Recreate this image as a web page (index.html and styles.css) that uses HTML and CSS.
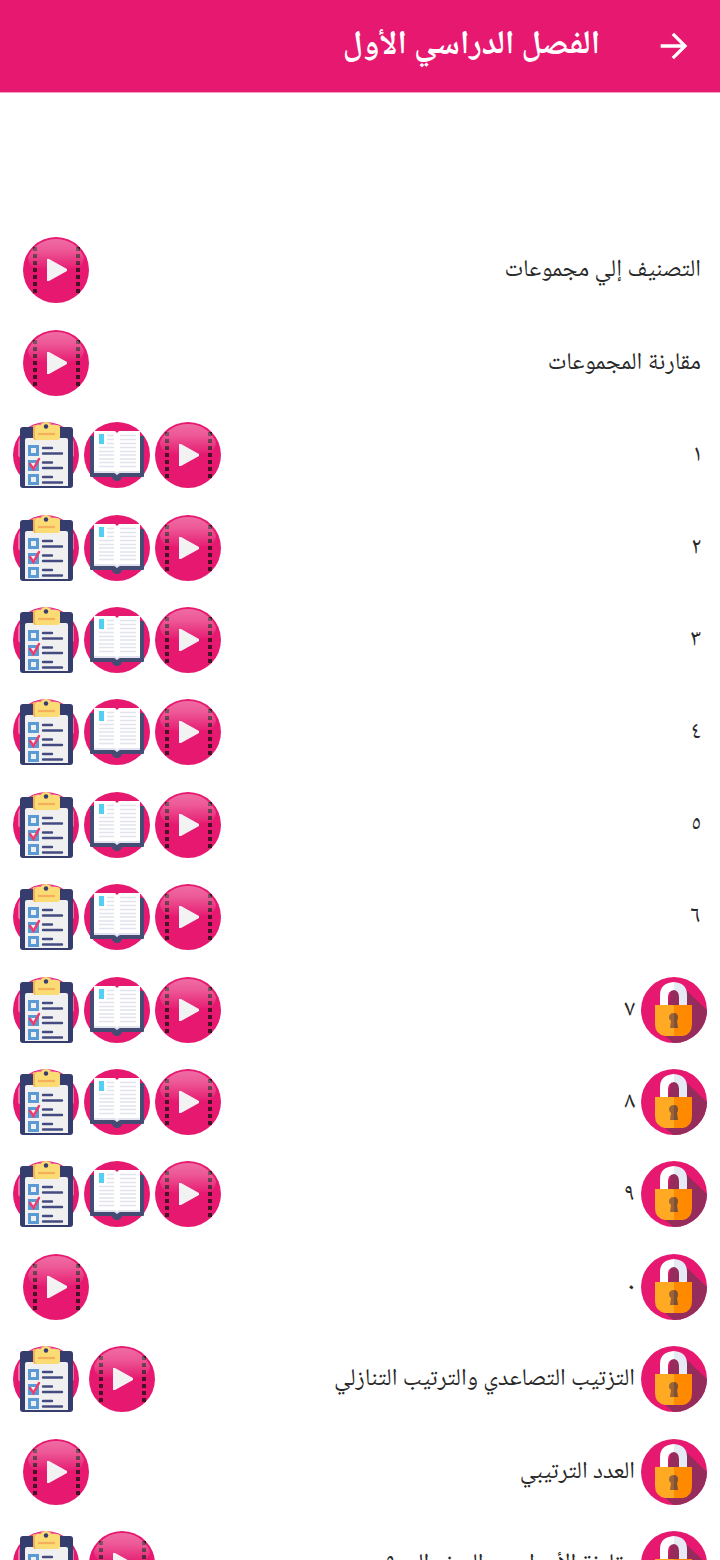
FILE: index.html
```
<!DOCTYPE html>
<html lang="ar" dir="rtl">
<head>
<meta charset="utf-8">
<meta name="viewport" content="width=device-width, initial-scale=1">
<title>الفصل الدراسي الأول</title>
<link rel="stylesheet" href="styles.css">
</head>
<body>
<svg class="sprite" aria-hidden="true">
  <defs>
    <linearGradient id="gloss" x1="0" y1="0" x2="0" y2="1">
      <stop offset="0" stop-color="#fff" stop-opacity=".36"/>
      <stop offset=".35" stop-color="#fff" stop-opacity=".28"/>
      <stop offset="1" stop-color="#fff" stop-opacity="0"/>
    </linearGradient>
    <clipPath id="disc"><circle cx="33" cy="33" r="33"/></clipPath>
  </defs>
  <symbol id="play" viewBox="0 0 66 66">
    <circle cx="33" cy="33" r="33" fill="#e6186f"/>
    <path d="M12 10v46M55 10v46" stroke="#471126" stroke-width="4" stroke-dasharray="4 3"/>
    <path d="M24 22h2L44 32v2L26 44h-2z" fill="#f2f2f2"/>
    <path d="M5 20C10 9 20 2 33 2s23 7 28 18c0 6-4 10-9 11q-19 5-38 0C9 30 5 26 5 20z" fill="url(#gloss)"/>
  </symbol>
  <symbol id="book" viewBox="0 0 66 66">
    <circle cx="33" cy="33" r="33" fill="#e6186f"/>
    <path d="M6 15q0-1 1-1h52q1 0 1 1v39q0 1-1 1H38q-1 4-5 4t-5-4H7q-1 0-1-1z" fill="#454c73"/>
    <path d="M10 9h21l2 2 2-2h21v42H36q-2 0-3 2-1-2-3-2H10z" fill="#fff"/>
    <path d="M10 49h20q2 0 3 2 1-2 3-2h20v2H36q-2 0-3 2-1-2-3-2H10z" fill="#e1e4ee"/>
    <path d="M15 12h5v10h-5z" fill="#52cff5"/>
    <path d="M23 13.500h7M23 17.500h7M23 21.500h7M15 25.500h15M15 29.500h15M15 33h15M15 37h15M15 40.500h15M15 44.500h15M36 13.500h16M36 17.500h16M36 21.500h16M36 25.500h16M36 29.500h16M36 33h16M36 37h16M36 40.500h16M36 44.500h16" stroke="#e1e4ee" stroke-width="1.300"/>
  </symbol>
  <symbol id="quiz" viewBox="0 0 66 66">
    <circle cx="33" cy="33" r="33" fill="#e6186f"/>
    <path d="M5 20C10 8 20 1 33 1s23 7 28 19v14l-5 4H10l-5-4z" fill="#fff" opacity=".38"/>
    <rect x="7" y="5" width="53" height="61" rx="3" fill="#353c6e"/>
    <path d="M14 16h39q2 0 2 2v46H12V18q0-2 2-2z" fill="#f0f0f1"/>
    <path d="M22 3h6q1-3 5-3t5 3h6q3 0 3 3v9q0 3-3 3H23q-3 0-3-3V5q0-2 2-2z" fill="#fbdc74"/>
    <path d="M22 3h2q-2 1-2 3v9q0 3 2 3h-1q-3 0-3-3V5q0-2 2-2z" fill="#f5ae5b"/>
    <path d="M25 12h17" stroke="#f5ae5b" stroke-width="2.200"/>
    <circle cx="33" cy="4.500" r="2.200" fill="#353c6e"/>
    <g fill="#f0f0f1" stroke="#5a9bd5" stroke-width="3">
      <path d="M16.500 24.500h8v8h-8zM16.500 39.500h8v8h-8zM16.500 53.500h8v8h-8z"/>
    </g>
    <path d="M17 42l3.500 5L26 37" fill="none" stroke="#ee3b6e" stroke-width="2.500" stroke-linecap="round"/>
    <path d="M30 26h9M30 31.500h19M30 40.500h9M30 46h19M30 55h9M30 60.500h19" stroke="#444b80" stroke-width="2.400" stroke-linecap="round"/>
  </symbol>
  <symbol id="lock" viewBox="0 0 66 66">
    <circle cx="33" cy="33" r="33" fill="#e6186f"/>
    <path d="M44 12l26 25v33H37L22 57l8-44z" fill="#952c5b" clip-path="url(#disc)"/>
    <path d="M19 29V18q0-12 14-13v8q-6 1-6 7v9z" fill="#fff"/>
    <path d="M46 29V18q0-12-13-13v8q5 1 5 7v9z" fill="#e6eaf5"/>
    <path d="M14 28h19v31h-9q-10-2-10-12z" fill="#ffaa22"/>
    <path d="M51 28H33v31h9q9-2 9-12z" fill="#ff8a00"/>
    <path d="M33 36q-5 0-5 4.500 0 2 2 3.500l-1 7h4z" fill="#9a6437"/>
    <path d="M33 36q4 0 4 4.500 0 2-1 3.500l1 7h-4z" fill="#7d5038"/>
  </symbol>
</svg>

<header class="bar">
  <button class="back" type="button" aria-label="رجوع">
    <svg viewBox="0 0 24 24"><path d="M12 4l-1.410 1.410L16.170 11H4v2h12.170l-5.580 5.590L12 20l8-8z"/></svg>
  </button>
  <h1 class="title">الفصل الدراسي الأول</h1>
</header>

<main>
<ul class="lessons">
  <li class="lesson"><span class="name">التصنيف إلي مجموعات</span><div class="actions solo"><button class="action" type="button" aria-label="فيديو"><svg><use href="#play"/></svg></button></div></li>
  <li class="lesson"><span class="name">مقارنة المجموعات</span><div class="actions solo"><button class="action" type="button" aria-label="فيديو"><svg><use href="#play"/></svg></button></div></li>
  <li class="lesson"><span class="name">١</span><div class="actions"><button class="action" type="button" aria-label="فيديو"><svg><use href="#play"/></svg></button><button class="action" type="button" aria-label="كتاب"><svg><use href="#book"/></svg></button><button class="action" type="button" aria-label="اختبار"><svg><use href="#quiz"/></svg></button></div></li>
  <li class="lesson"><span class="name">٢</span><div class="actions"><button class="action" type="button" aria-label="فيديو"><svg><use href="#play"/></svg></button><button class="action" type="button" aria-label="كتاب"><svg><use href="#book"/></svg></button><button class="action" type="button" aria-label="اختبار"><svg><use href="#quiz"/></svg></button></div></li>
  <li class="lesson"><span class="name">٣</span><div class="actions"><button class="action" type="button" aria-label="فيديو"><svg><use href="#play"/></svg></button><button class="action" type="button" aria-label="كتاب"><svg><use href="#book"/></svg></button><button class="action" type="button" aria-label="اختبار"><svg><use href="#quiz"/></svg></button></div></li>
  <li class="lesson"><span class="name">٤</span><div class="actions"><button class="action" type="button" aria-label="فيديو"><svg><use href="#play"/></svg></button><button class="action" type="button" aria-label="كتاب"><svg><use href="#book"/></svg></button><button class="action" type="button" aria-label="اختبار"><svg><use href="#quiz"/></svg></button></div></li>
  <li class="lesson"><span class="name">٥</span><div class="actions"><button class="action" type="button" aria-label="فيديو"><svg><use href="#play"/></svg></button><button class="action" type="button" aria-label="كتاب"><svg><use href="#book"/></svg></button><button class="action" type="button" aria-label="اختبار"><svg><use href="#quiz"/></svg></button></div></li>
  <li class="lesson"><span class="name">٦</span><div class="actions"><button class="action" type="button" aria-label="فيديو"><svg><use href="#play"/></svg></button><button class="action" type="button" aria-label="كتاب"><svg><use href="#book"/></svg></button><button class="action" type="button" aria-label="اختبار"><svg><use href="#quiz"/></svg></button></div></li>
  <li class="lesson"><svg class="lock"><use href="#lock"/></svg><span class="name">٧</span><div class="actions"><button class="action" type="button" aria-label="فيديو"><svg><use href="#play"/></svg></button><button class="action" type="button" aria-label="كتاب"><svg><use href="#book"/></svg></button><button class="action" type="button" aria-label="اختبار"><svg><use href="#quiz"/></svg></button></div></li>
  <li class="lesson"><svg class="lock"><use href="#lock"/></svg><span class="name">٨</span><div class="actions"><button class="action" type="button" aria-label="فيديو"><svg><use href="#play"/></svg></button><button class="action" type="button" aria-label="كتاب"><svg><use href="#book"/></svg></button><button class="action" type="button" aria-label="اختبار"><svg><use href="#quiz"/></svg></button></div></li>
  <li class="lesson"><svg class="lock"><use href="#lock"/></svg><span class="name">٩</span><div class="actions"><button class="action" type="button" aria-label="فيديو"><svg><use href="#play"/></svg></button><button class="action" type="button" aria-label="كتاب"><svg><use href="#book"/></svg></button><button class="action" type="button" aria-label="اختبار"><svg><use href="#quiz"/></svg></button></div></li>
  <li class="lesson"><svg class="lock"><use href="#lock"/></svg><span class="name">٠</span><div class="actions solo"><button class="action" type="button" aria-label="فيديو"><svg><use href="#play"/></svg></button></div></li>
  <li class="lesson"><svg class="lock"><use href="#lock"/></svg><span class="name">التزتيب التصاعدي والترتيب التنازلي</span><div class="actions pair"><button class="action" type="button" aria-label="فيديو"><svg><use href="#play"/></svg></button><button class="action" type="button" aria-label="اختبار"><svg><use href="#quiz"/></svg></button></div></li>
  <li class="lesson"><svg class="lock"><use href="#lock"/></svg><span class="name">العدد الترتيبي</span><div class="actions solo"><button class="action" type="button" aria-label="فيديو"><svg><use href="#play"/></svg></button></div></li>
  <li class="lesson"><svg class="lock"><use href="#lock"/></svg><span class="name">مقارنة الأعداد من الصفر إلى ٩</span><div class="actions pair"><button class="action" type="button" aria-label="فيديو"><svg><use href="#play"/></svg></button><button class="action" type="button" aria-label="اختبار"><svg><use href="#quiz"/></svg></button></div></li>
</ul>
</main>
</body>
</html>
```
FILE: styles.css
```
* {
  box-sizing: border-box;
}

body {
  margin: 0;
  height: 100vh;
  display: flex;
  flex-direction: column;
  background: #fff;
  color: #282828;
  font-family: "Noto Naskh Arabic UI", "Noto Naskh Arabic", "Noto Sans", sans-serif;
  font-size: 24px;
}

.sprite {
  position: absolute;
  width: 0;
  height: 0;
}

.bar {
  flex: none;
  display: flex;
  align-items: center;
  gap: 54px;
  padding: 26px;
  border-bottom: 1px solid #f5a3c5;
  background: #e6186f;
}

.back {
  display: block;
  width: 40px;
  height: 40px;
  padding: 0;
  border: 0;
  background: none;
}

.back svg {
  display: block;
  width: 100%;
  height: 100%;
  fill: #fff;
}

.title {
  margin: 0;
  color: #fff;
  font-size: 33px;
  font-weight: 700;
  line-height: 40px;
}

main {
  flex: 1;
  min-height: 0;
  overflow-y: auto;
  scrollbar-width: none;
}

.lessons {
  margin: 0;
  padding: 131px 0 0;
  list-style: none;
}

.lesson {
  display: flex;
  align-items: center;
  min-height: 92px;
  padding: 0 13px;
}

.lesson:nth-child(5n + 1),
.lesson:nth-child(5n + 3) {
  margin-bottom: 1px;
}

.name {
  flex: 1;
  margin-inline-start: 6px;
  line-height: 40px;
}

.lock {
  flex: none;
  width: 66px;
  height: 66px;
}

.actions {
  flex: none;
  display: flex;
  gap: 5px;
}

.actions.pair {
  gap: 10px;
}

.actions.solo {
  padding-inline-end: 10px;
}

.action {
  width: 66px;
  height: 66px;
  padding: 0;
  border: 0;
  background: none;
}

.action svg {
  display: block;
  width: 100%;
  height: 100%;
}
```
